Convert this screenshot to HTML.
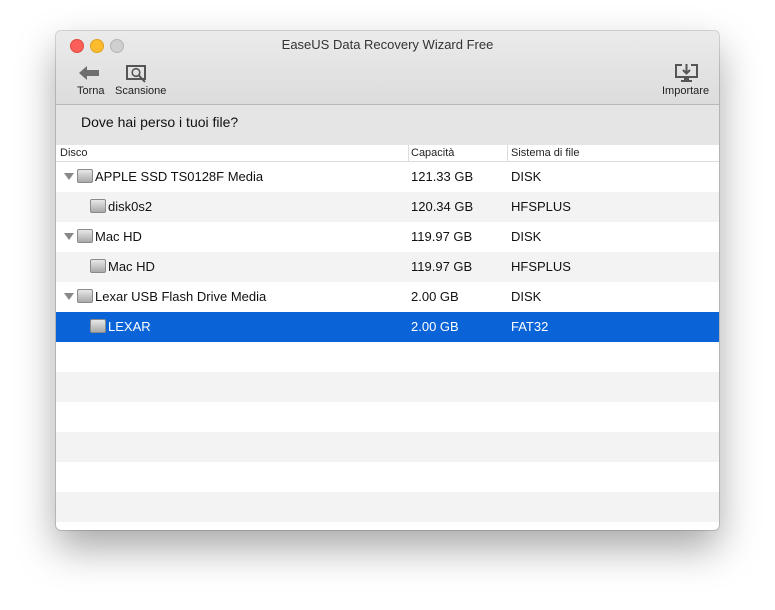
<!DOCTYPE html>
<html><head><meta charset="utf-8"><style>
body{margin:0;width:775px;height:610px;background:#fff;font-family:"Liberation Sans",sans-serif;position:relative;overflow:hidden}
.win{position:absolute;left:56px;top:31px;width:663px;height:499px;background:#fff;border-radius:5px;overflow:hidden;box-shadow:0 18px 40px rgba(0,0,0,.35),0 0 0 1px rgba(0,0,0,.15)}
.tb{position:absolute;left:0;top:0;width:663px;height:73px;background:linear-gradient(#ebebeb,#dcdcdc);border-bottom:1px solid #b8b8b8}
.dot{position:absolute;top:8px;width:12px;height:12px;border-radius:50%}
.title{position:absolute;top:6px;left:0;width:663px;text-align:center;font-size:13px;color:#333}
.lbl{position:absolute;top:54px;font-size:11px;color:#222}
.ask{position:absolute;top:74px;left:0;width:663px;height:40px;background:#e5e5e5;border-bottom:1px solid #d0d0d0}
.ask span{position:absolute;left:25px;top:9px;font-size:14px;color:#111}
.hdr{position:absolute;top:114px;left:0;width:663px;height:16px;border-bottom:1px solid #ddd;font-size:11px;color:#222;background:#fff}
.hdr div{position:absolute;top:2px}
.sep{position:absolute;top:0;width:1px;height:16px;background:#ddd}
.row{position:absolute;left:0;width:663px;height:30px;font-size:13px;color:#111}
.row div{position:absolute;top:7px}
.g{background:#f3f3f3}
.sel{background:#0a64d8;color:#fff}
.hd{display:inline-block;width:16px;height:14px;background:linear-gradient(#e8e8e8,#a9a9a9);border:1px solid #8a8a8a;border-radius:2px;vertical-align:-2px;margin-right:2px;box-sizing:border-box}
.tri{display:inline-block;width:0;height:0;border-left:5px solid transparent;border-right:5px solid transparent;border-top:7px solid #888;margin-right:3px;vertical-align:1px}
</style></head><body>
<div class="win">
<div class="tb">
<div class="dot" style="left:14px;background:#fc5f57;border:0.5px solid #de4a41"></div>
<div class="dot" style="left:34px;background:#fdbc2e;border:0.5px solid #dea123"></div>
<div class="dot" style="left:54px;background:#cfcfcf;border:0.5px solid #b5b5b5"></div>
<div class="title">EaseUS Data Recovery Wizard Free</div>
<svg style="position:absolute;left:22px;top:34px" width="22" height="17"><path d="M1 8 L9 1 L9 5 L21 5 L21 11 L9 11 L9 15 Z" fill="#6f6f6f"/></svg>
<svg style="position:absolute;left:70px;top:34px" width="24" height="19"><rect x="1" y="1" width="18" height="13" fill="none" stroke="#555" stroke-width="2"/><circle cx="10" cy="7.5" r="3.8" fill="none" stroke="#555" stroke-width="1.6"/><path d="M12.5 10 L19 17" stroke="#555" stroke-width="2"/></svg>
<div class="lbl" style="left:21px">Torna</div>
<div class="lbl" style="left:59px">Scansione</div>
<svg style="position:absolute;left:619px;top:33px" width="24" height="20"><path d="M7 1 H1 V13 H22 V1 H16" fill="none" stroke="#555" stroke-width="2"/><path d="M11.5 0 V9 M8 6 L11.5 9.5 L15 6" fill="none" stroke="#555" stroke-width="2"/><rect x="9" y="14" width="5" height="2" fill="#555"/><rect x="6" y="16" width="11" height="2" fill="#555"/></svg>
<div class="lbl" style="left:606px">Importare</div>
</div>
<div class="ask"><span>Dove hai perso i tuoi file?</span></div>
<div class="hdr"><div style="left:4px">Disco</div><span class="sep" style="left:352px"></span><div style="left:355px">Capacità</div><span class="sep" style="left:451px"></span><div style="left:455px">Sistema di file</div></div>
<div class="row" style="top:131px"><div style="left:8px"><span class="tri"></span><span class="hd"></span>APPLE SSD TS0128F Media</div><div style="left:355px">121.33 GB</div><div style="left:455px">DISK</div></div>
<div class="row g" style="top:161px"><div style="left:34px"><span class="hd"></span>disk0s2</div><div style="left:355px">120.34 GB</div><div style="left:455px">HFSPLUS</div></div>
<div class="row" style="top:191px"><div style="left:8px"><span class="tri"></span><span class="hd"></span>Mac HD</div><div style="left:355px">119.97 GB</div><div style="left:455px">DISK</div></div>
<div class="row g" style="top:221px"><div style="left:34px"><span class="hd"></span>Mac HD</div><div style="left:355px">119.97 GB</div><div style="left:455px">HFSPLUS</div></div>
<div class="row" style="top:251px"><div style="left:8px"><span class="tri"></span><span class="hd"></span>Lexar USB Flash Drive Media</div><div style="left:355px">2.00 GB</div><div style="left:455px">DISK</div></div>
<div class="row sel" style="top:281px"><div style="left:34px"><span class="hd"></span>LEXAR</div><div style="left:355px">2.00 GB</div><div style="left:455px">FAT32</div></div>
<div class="row" style="top:311px"></div>
<div class="row g" style="top:341px"></div>
<div class="row" style="top:371px"></div>
<div class="row g" style="top:401px"></div>
<div class="row" style="top:431px"></div>
<div class="row g" style="top:461px"></div>
</div>
</body></html>
